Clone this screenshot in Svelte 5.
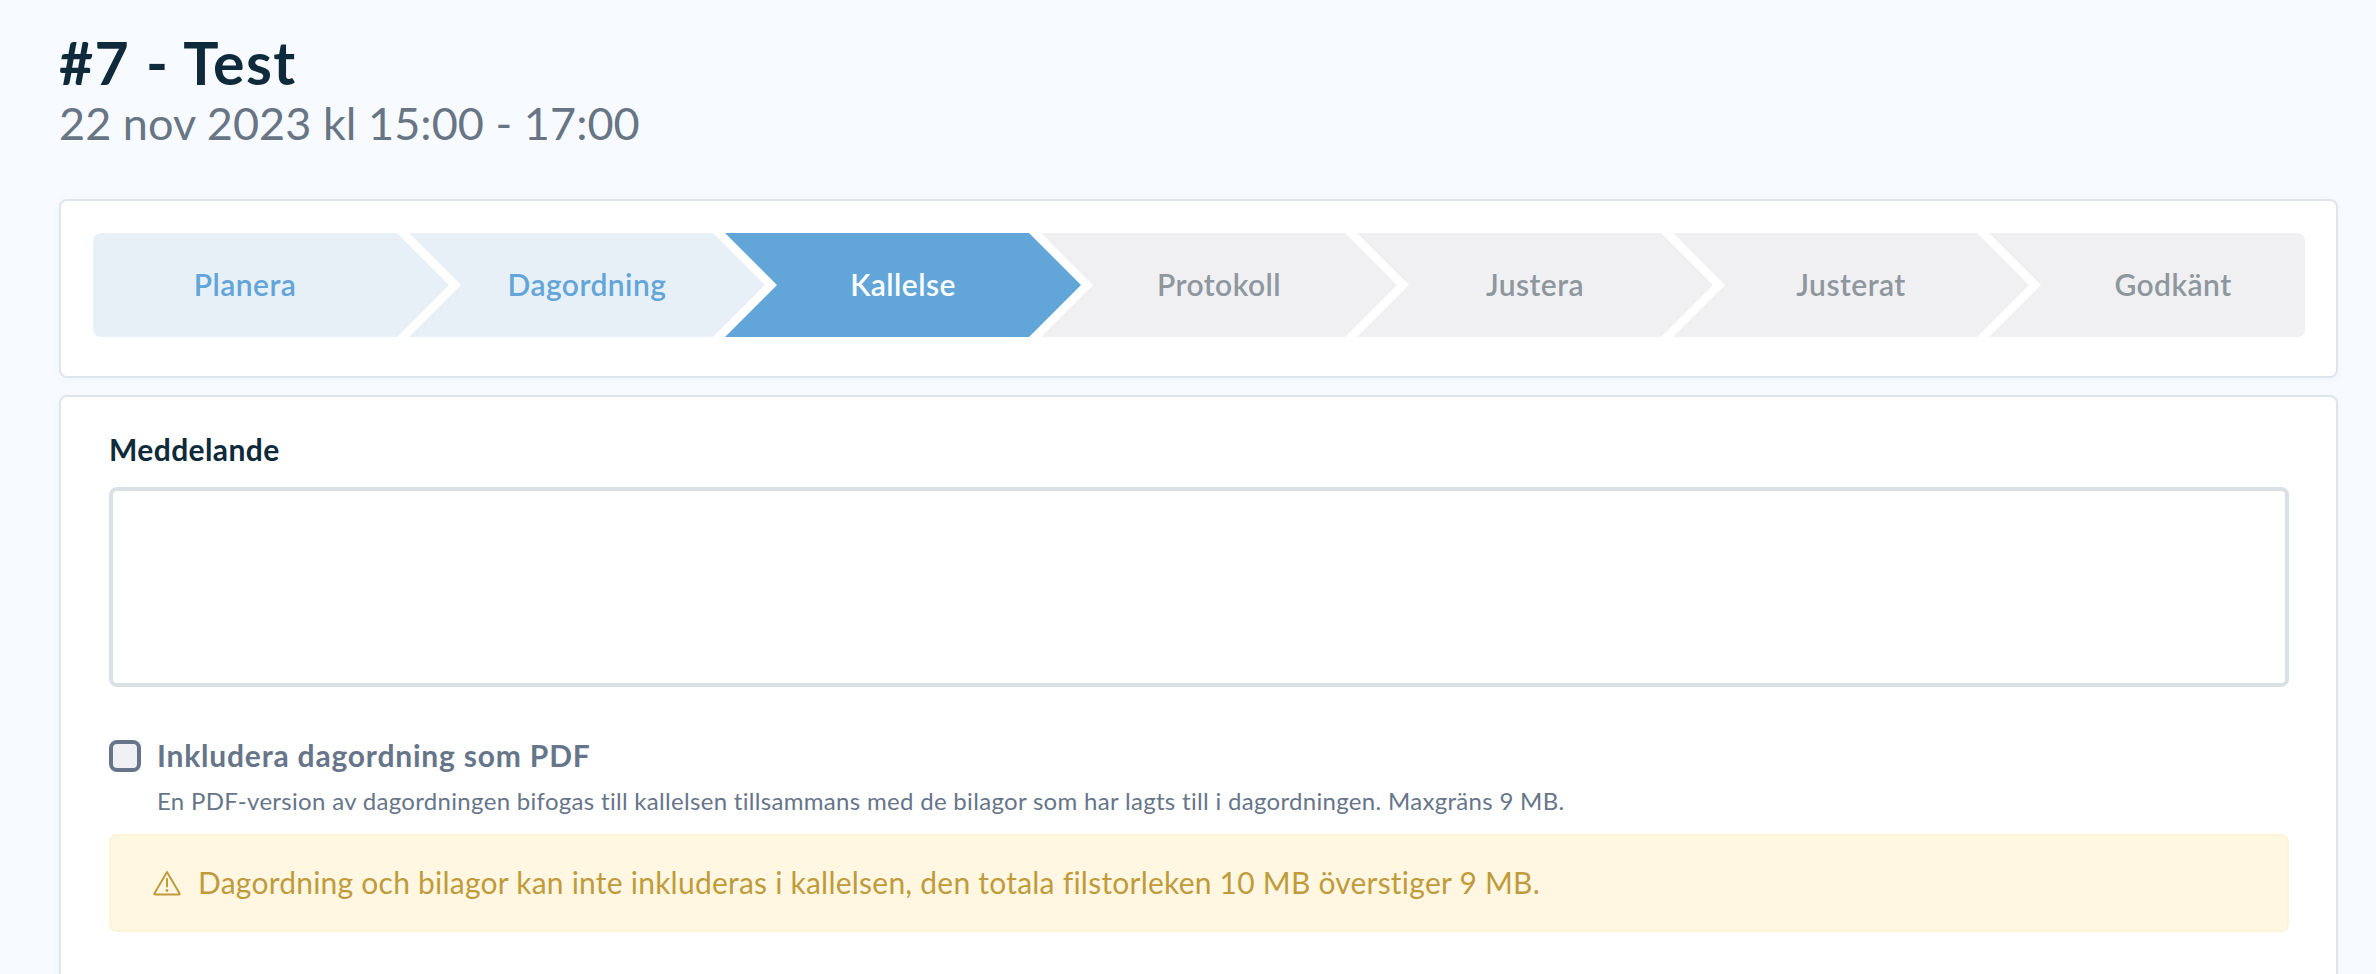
<script>
  const steps = [
    { label: 'Planera', state: 'done' },
    { label: 'Dagordning', state: 'done' },
    { label: 'Kallelse', state: 'active' },
    { label: 'Protokoll', state: 'todo' },
    { label: 'Justera', state: 'todo' },
    { label: 'Justerat', state: 'todo' },
    { label: 'Godkänt', state: 'todo' }
  ];
</script>

<main class="page">
  <header class="head">
    <h1>#7 - Test</h1>
    <p class="sub">22 nov 2023 kl 15:00 - 17:00</p>
  </header>

  <section class="card stepper-card">
    <div class="steps">
      {#each steps as s}
        <div class="step {s.state}">{s.label}</div>
      {/each}
    </div>
  </section>

  <section class="card form-card">
    <label class="field-label" for="msg">Meddelande</label>
    <textarea id="msg" class="area"></textarea>

    <div class="check-row">
      <span class="box"></span>
      <span class="check-label">Inkludera dagordning som PDF</span>
    </div>
    <p class="help">En PDF-version av dagordningen bifogas till kallelsen tillsammans med de bilagor som har lagts till i dagordningen. Maxgräns 9 MB.</p>

    <div class="warn">
      <svg class="warn-icon" viewBox="0 0 28 26" fill="none" stroke="currentColor" stroke-width="2" stroke-linejoin="round" stroke-linecap="round">
        <path d="M14 2 L26.6 23.4 Q27 24.6 25.8 24.6 H2.2 Q1 24.6 1.4 23.4 Z" />
        <path d="M14 9 V16.5" />
        <path d="M14 20.4 V20.6" stroke-width="2.6" />
      </svg>
      <span class="warn-text">Dagordning och bilagor kan inte inkluderas i kallelsen, den totala filstorleken 10 MB överstiger 9 MB.</span>
    </div>
  </section>
</main>

<style>
  :global(body) {
    margin: 0;
    background: #f7fbff;
    overflow: hidden;
  }
  .page {
    box-sizing: border-box;
    height: 974px;
    overflow: hidden;
    padding: 31px 38px 0 59px;
    font-family: Lato, "Noto Sans", sans-serif;
    font-variant-ligatures: none;
    color: #0f2a3a;
  }
  .head {
    height: 168px;
  }
  h1 {
    margin: 0;
    font-size: 59px;
    line-height: 63px;
    font-weight: 700;
    letter-spacing: 1.4px;
    color: #0f2a3a;
  }
  .sub {
    margin: 0;
    font-size: 45px;
    line-height: 58px;
    font-weight: 400;
    letter-spacing: 0.05px;
    color: #687585;
  }
  .card {
    box-sizing: border-box;
    background: #fff;
    border: 2px solid #dfe5ec;
    border-radius: 8px;
    box-shadow: 0 2px 8px rgba(30, 80, 130, 0.04);
  }
  .stepper-card {
    height: 179px;
    padding: 32px 31px 0 32px;
    margin-bottom: 17px;
  }
  .steps {
    display: grid;
    grid-template-columns: repeat(7, 1fr);
  }
  .step {
    box-sizing: border-box;
    height: 104px;
    padding-bottom: 2px;
    margin-right: -40px;
    display: flex;
    align-items: center;
    justify-content: center;
    font-size: 30px;
    font-weight: 600;
    letter-spacing: 0.45px;
    clip-path: polygon(0 0, calc(100% - 52px) 0, 100% 50%, calc(100% - 52px) 100%, 0 100%, 52px 50%);
  }
  .step:first-child {
    padding-right: 52px;
    border-radius: 8px 0 0 8px;
    clip-path: polygon(0 0, calc(100% - 52px) 0, 100% 50%, calc(100% - 52px) 100%, 0 100%);
  }
  .step:last-child {
    margin-right: 0;
    padding-left: 52px;
    border-radius: 0 8px 8px 0;
    clip-path: polygon(0 0, 100% 0, 100% 100%, 0 100%, 52px 50%);
  }
  .done {
    background: #e8f0f7;
    color: #62a5d9;
  }
  .active {
    background: #62a5d9;
    color: #fff;
  }
  .todo {
    background: #f0f0f2;
    color: #8e979e;
  }
  .form-card {
    height: 700px;
    padding: 35px 47px 0 48px;
  }
  .field-label {
    display: block;
    font-size: 30px;
    line-height: 34px;
    font-weight: 700;
    letter-spacing: 0.4px;
    color: #0f2a3a;
    margin-bottom: 21px;
  }
  .area {
    display: block;
    box-sizing: border-box;
    width: 100%;
    height: 200px;
    border: 4px solid #d9e0e6;
    border-radius: 8px;
    background: #fff;
    resize: none;
    outline: none;
  }
  .check-row {
    display: flex;
    align-items: center;
    gap: 16px;
    margin-top: 53px;
  }
  .box {
    box-sizing: border-box;
    width: 32px;
    height: 32px;
    border: 4px solid #66758a;
    border-radius: 8px;
    background: #f0f0f2;
  }
  .check-label {
    font-size: 30px;
    line-height: 32px;
    font-weight: 700;
    letter-spacing: 0.8px;
    color: #66758a;
    margin-top: -2px;
  }
  .help {
    margin: 14px 0 0 48px;
    font-size: 24px;
    line-height: 30px;
    letter-spacing: 0.31px;
    color: #66758a;
  }
  .warn {
    display: flex;
    align-items: center;
    gap: 17px;
    height: 98px;
    box-sizing: border-box;
    margin-top: 18px;
    padding-left: 42px;
    background: #fff7e1;
    border-radius: 8px;
    border: 2px solid #fff3d6;
    color: #bf9b3c;
    font-size: 30px;
    letter-spacing: 0.23px;
  }
  .warn-text {
    margin-top: -2px;
  }
  .warn-icon {
    width: 28px;
    height: 26px;
    flex: none;
  }
</style>
